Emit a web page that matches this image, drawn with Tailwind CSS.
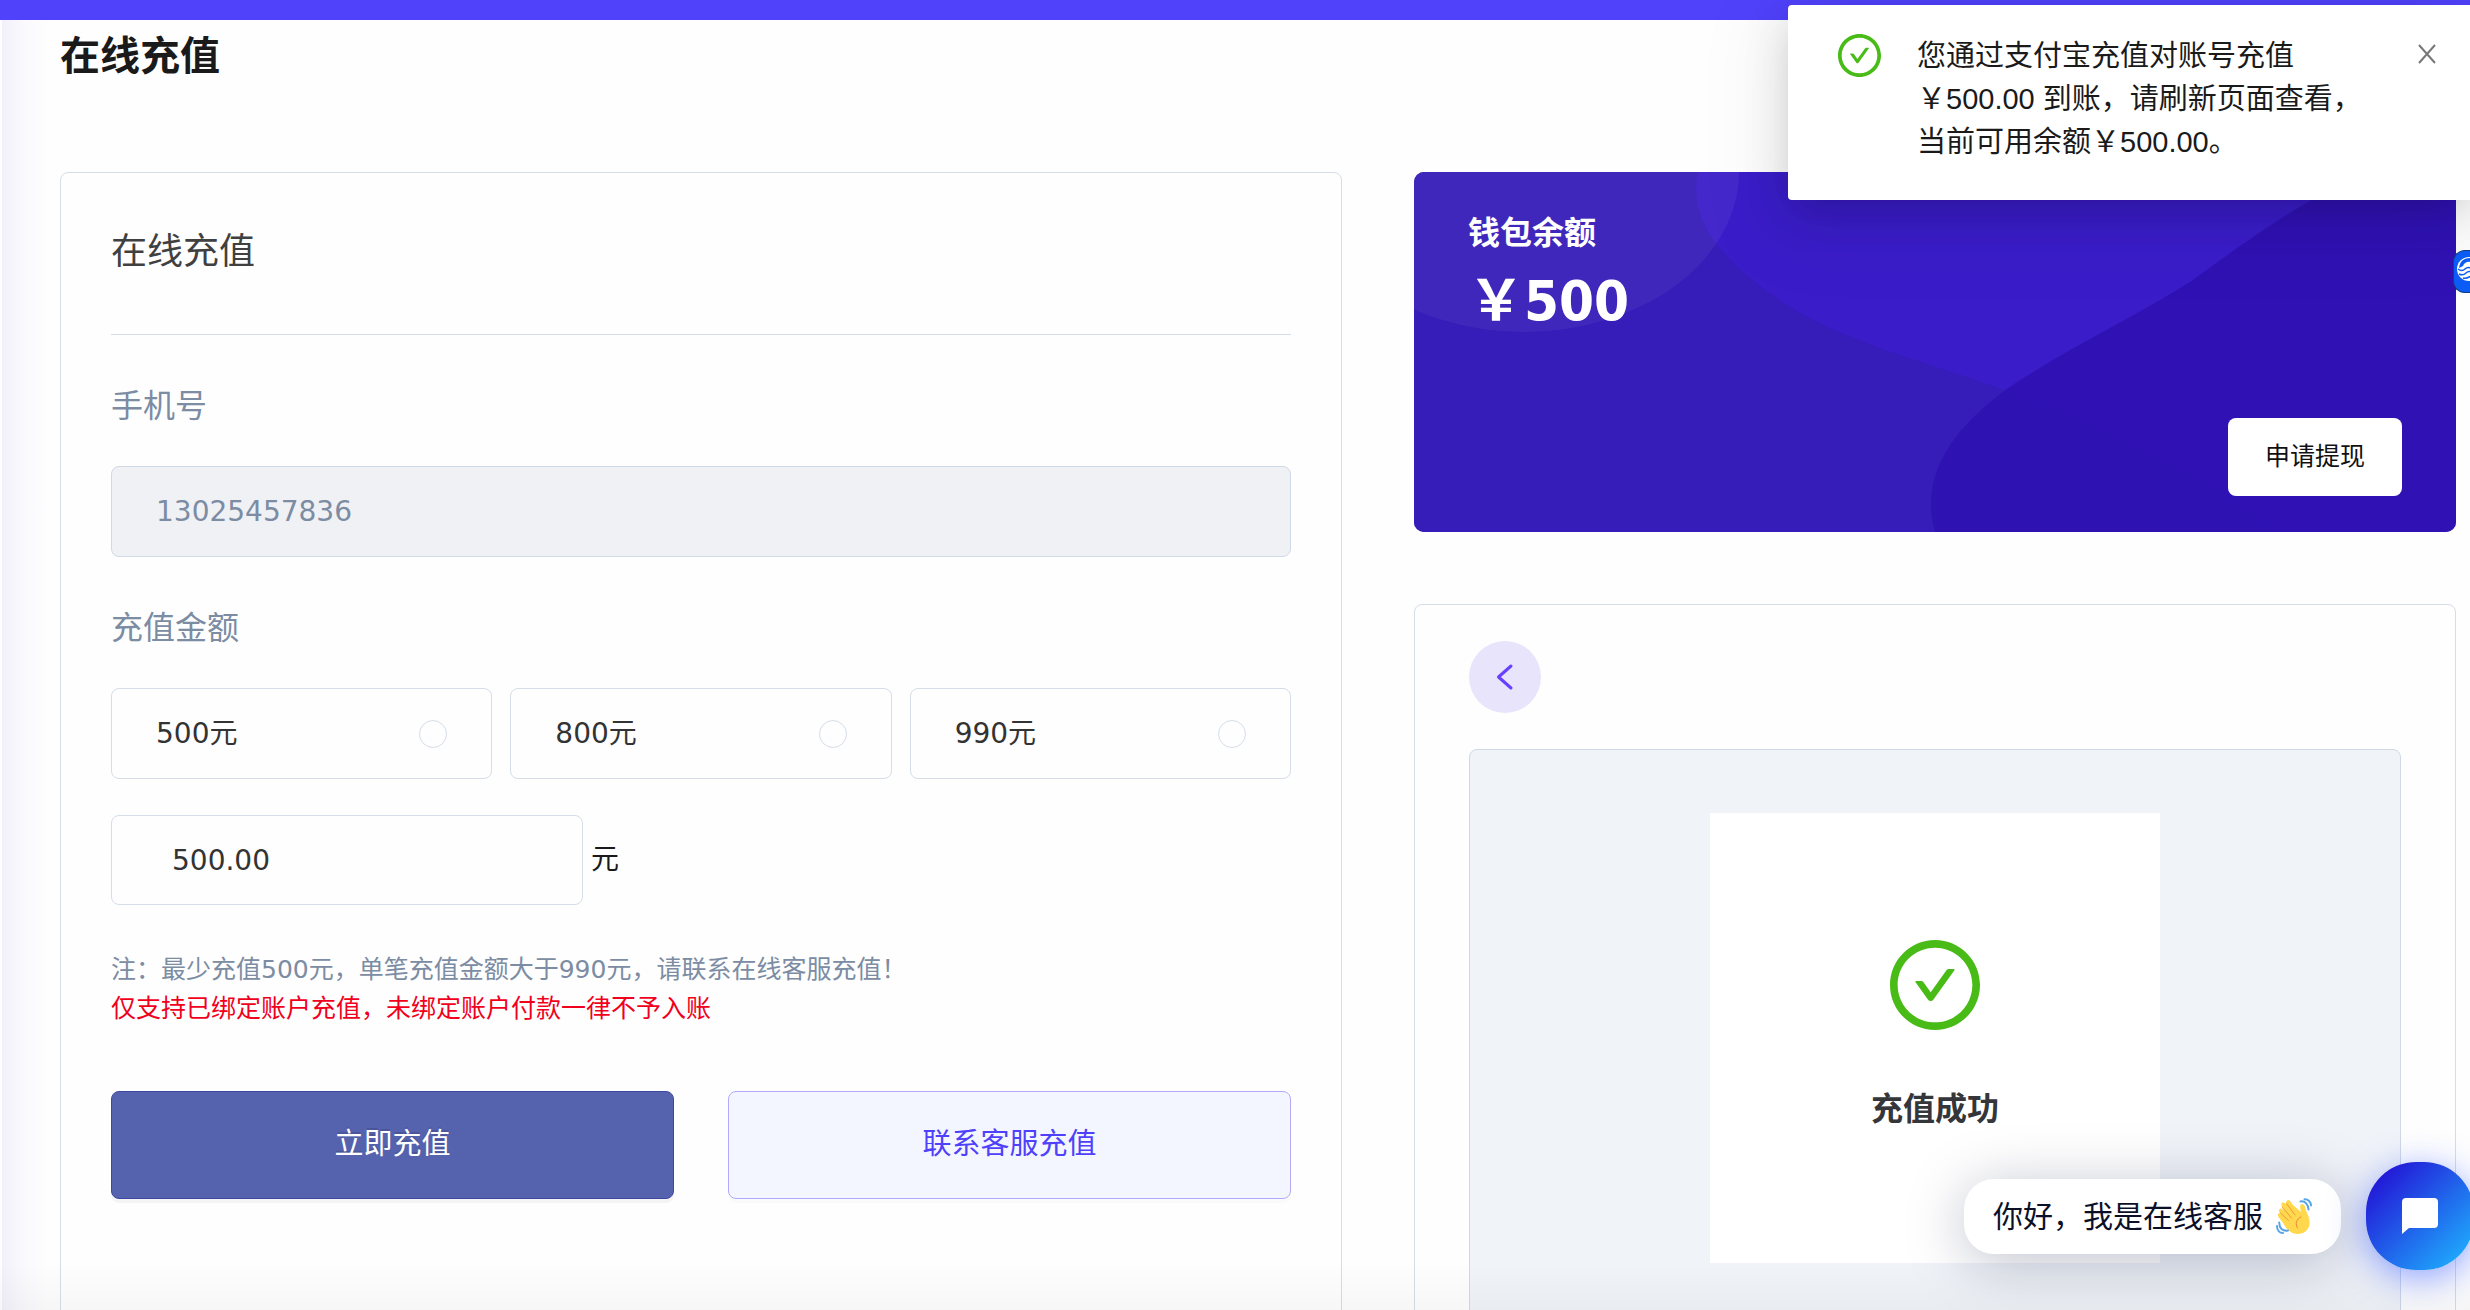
<!DOCTYPE html>
<html lang="zh-CN">
<head>
    <meta charset="UTF-8"/>
    <title>在线充值</title>
    <script src="https://cdn.jsdelivr.net/npm/@tailwindcss/browser@4"></script>
</head>
<body class="relative h-screen overflow-hidden bg-[#fefefe] font-['DejaVu_Sans','Noto_Sans_CJK_SC',sans-serif] text-[#1a1a1a]">
    <!-- Top Bar -->
    <header class="h-5 bg-[#5042fb]"></header>

    <!-- Main Content -->
    <main class="pl-15 pr-3.5">
        <h1 class="pt-1.5 text-[40px] leading-[60px] font-bold">在线充值</h1>

        <div class="mt-[86px] grid grid-cols-[1282fr_1042fr] items-start gap-x-18">
            <!-- Recharge form -->
            <form class="rounded-lg border border-[#d5dde8] px-[50px] pt-[52px] pb-40">
                <h2 class="border-b border-[#d5dde8] pb-[55px] text-[36px] leading-[54px] text-[#404040]">在线充值</h2>

                <label for="phone" class="mt-[47px] block text-[32px] leading-[48px] text-[#7b8ca3]">手机号</label>
                <input id="phone" type="text" value="13025457836" disabled class="mt-9 block h-[91px] w-full rounded-lg border border-[#d0d9e6] bg-[#f0f1f5] px-11 text-[28px] text-[#7b8ca3]"/>

                <label for="amount" class="mt-[47px] block text-[32px] leading-[48px] text-[#7b8ca3]">充值金额</label>
                <div class="mt-9 grid grid-cols-3 gap-[18px] text-[28px] text-[#333]">
                    <label class="flex h-[91px] items-center justify-between rounded-lg border border-[#d5dde8] px-11">
                        500元
                        <input type="radio" name="preset" value="500" class="size-7 appearance-none rounded-full border border-[#d5dde8]"/>
                    </label>
                    <label class="flex h-[91px] items-center justify-between rounded-lg border border-[#d5dde8] px-11">
                        800元
                        <input type="radio" name="preset" value="800" class="size-7 appearance-none rounded-full border border-[#d5dde8]"/>
                    </label>
                    <label class="flex h-[91px] items-center justify-between rounded-lg border border-[#d5dde8] px-11">
                        990元
                        <input type="radio" name="preset" value="990" class="size-7 appearance-none rounded-full border border-[#d5dde8]"/>
                    </label>
                </div>

                <div class="mt-9 flex items-center gap-2 text-[28px]">
                    <input id="amount" type="text" value="500.00" class="h-[90px] w-2/5 rounded-lg border border-[#d5dde8] px-15 text-[#333]"/>
                    <span>元</span>
                </div>

                <p class="mt-[45px] text-[25px] leading-[39px] text-[#7b8ca3]">注：最少充值500元，单笔充值金额大于990元，请联系在线客服充值！</p>
                <p class="text-[25px] leading-[39px] text-[#f0001c]">仅支持已绑定账户充值，未绑定账户付款一律不予入账</p>

                <div class="mt-[63px] grid grid-cols-2 gap-[54px] text-[29px]">
                    <button type="submit" class="h-[108px] rounded-lg border border-[#3d48a3] bg-[#5563af] text-white shadow-[0_4px_0_rgba(0,0,0,0.04)] text-shadow-[0_-2px_0_rgba(0,0,0,0.12)]">立即充值</button>
                    <button type="button" class="h-[108px] rounded-lg border border-[#b3a9fb] bg-[#f3f6ff] text-[#4f40fa] shadow-[0_4px_0_rgba(0,0,0,0.015)]">联系客服充值</button>
                </div>
            </form>

            <div class="flex flex-col gap-18">
                <!-- Wallet -->
                <section class="relative flex min-h-[360px] flex-col overflow-hidden rounded-[10px] bg-[#3a1dc9] px-[54px] pt-[37px] pb-9 text-white">
                    <svg class="absolute inset-0 size-full" viewBox="0 0 1042 360" preserveAspectRatio="none" aria-hidden="true">
                        <path d="M0 0H284C279 26 285 48 301 70C322 97 352 121 392 144C452 176 525 194 593 219C700 258 800 308 860 360H0Z" fill="#361cb9"/>
                        <path d="M1042 0H960C935 8 915 18 896 29C855 52 815 82 776 110C715 148 650 178 593 217C538 257 505 305 521 360H1042Z" fill="#2f11b1" fill-opacity=".88"/>
                        <ellipse cx="110" cy="0" rx="215" ry="160" fill="#fff" fill-opacity=".05"/>
                    </svg>
                    <h2 class="relative text-[32px] leading-[48px] font-bold">钱包余额</h2>
                    <p class="relative mt-1 font-['DejaVu_Sans_Condensed','Noto_Sans_CJK_SC',sans-serif] text-[56px] leading-[80px] font-bold">￥500</p>
                    <button type="button" class="relative mt-auto h-[78px] self-end rounded-lg bg-white px-[37px] text-[25px] text-[#111]">申请提现</button>
                </section>

                <!-- Payment result -->
                <section class="rounded-lg border border-[#d5dde8] px-[54px] pt-9 pb-15">
                    <button type="button" aria-label="返回" class="flex size-18 items-center justify-center rounded-full bg-[#e7e4fb]">
                        <svg class="size-8" viewBox="0 0 32 32" fill="none" stroke="#6840ff" stroke-width="3" stroke-linecap="round" stroke-linejoin="round"><path d="M22 5L9.500 16L22 27"/></svg>
                    </button>
                    <div class="mt-9 rounded-lg border border-[#d0d9e6] bg-[#f0f3f8] py-[63px]">
                        <div class="mx-auto flex size-[450px] flex-col items-center bg-white pt-[127px]">
                            <svg class="size-[90px]" viewBox="64 64 896 896" fill="#49bb17"><path d="M699 353h-46.900c-10.200 0-19.900 4.900-25.900 13.300L469 584.300l-71.200-98.800c-6-8.300-15.600-13.300-25.900-13.300H325c-6.500 0-10.300 7.400-6.500 12.700l124.600 172.800a31.800 31.800 0 0 0 51.700 0l210.600-292c3.900-5.300.1-12.700-6.400-12.700z"/><path d="M512 64C264.600 64 64 264.600 64 512s200.600 448 448 448 448-200.600 448-448S759.400 64 512 64zm0 820c-205.400 0-372-166.600-372-372s166.600-372 372-372 372 166.600 372 372-166.600 372-372 372z"/></svg>
                            <p class="mt-[55px] text-[32px] leading-[48px] font-bold text-[#35363a]">充值成功</p>
                        </div>
                    </div>
                </section>
            </div>
        </div>
    </main>

    <!-- Edge shadows -->
    <div class="pointer-events-none absolute top-5 bottom-0 left-0.5 w-12 bg-linear-to-r from-[#5042d0]/7 via-[#5042d0]/2 to-transparent"></div>
    <div class="pointer-events-none absolute inset-x-0 bottom-0 h-12 bg-linear-to-b from-transparent to-black/3"></div>

    <!-- Notification -->
    <div role="alert" class="absolute top-[5px] right-0 flex w-[682px] items-start rounded-l-sm bg-white pt-[29px] pr-[33px] pb-9 pl-[50px] shadow-[0_12px_32px_-16px_rgba(0,0,0,0.12),0_12px_48px_rgba(0,0,0,0.12),0_18px_80px_24px_rgba(0,0,0,0.05)]">
        <svg class="size-[43px] shrink-0" viewBox="64 64 896 896" fill="#49bb17"><path d="M699 353h-46.900c-10.200 0-19.900 4.900-25.900 13.300L469 584.300l-71.200-98.800c-6-8.300-15.600-13.300-25.900-13.300H325c-6.500 0-10.300 7.400-6.500 12.700l124.600 172.800a31.800 31.800 0 0 0 51.700 0l210.600-292c3.900-5.300.1-12.700-6.400-12.700z"/><path d="M512 64C264.600 64 64 264.600 64 512s200.600 448 448 448 448-200.600 448-448S759.400 64 512 64zm0 820c-205.400 0-372-166.600-372-372s166.600-372 372-372 372 166.600 372 372-166.600 372-372 372z"/></svg>
        <p class="ml-9 flex-1 pt-px font-['Liberation_Sans','Noto_Sans_CJK_SC',sans-serif] text-[29px] leading-[43px]">您通过支付宝充值对账号充值<br/>￥500.00 到账，请刷新页面查看，<br/>当前可用余额￥500.00。</p>
        <button type="button" aria-label="关闭" class="mt-2.5">
            <svg class="size-5" viewBox="0 0 20 20" fill="none" stroke="#777" stroke-width="2"><path d="M2 1L18 19M18 1L2 19"/></svg>
        </button>
    </div>

    <!-- Side tab -->
    <button type="button" aria-label="侧边栏" class="absolute top-[250px] right-0 h-[43px] w-[17px] overflow-hidden rounded-l-xl border border-r-0 border-[#123c80] bg-[#0a5cf5]">
        <svg class="h-[43px] w-[34px]" viewBox="0 0 34 43" fill="none">
            <circle cx="15" cy="18" r="12" fill="#fff"/>
            <path d="M5 17C6 9 11 7 17 7V11C13 10 10 12 9 15Z" fill="#0a5cf5"/>
            <path d="M4 18Q8 21 11 18T19 18M5 23Q9 25 12 22T19 22M9 27Q12 28 17 25" stroke="#0a5cf5" stroke-width="1.500"/>
        </svg>
    </button>

    <!-- Customer service -->
    <div class="absolute right-[-4px] bottom-10 flex items-center gap-[25px]">
        <div class="flex h-[75px] items-center gap-[13px] rounded-[30px] bg-white px-[29px] text-[30px] text-[#0b1028] shadow-[0_8px_60px_rgba(5,15,60,0.26)]">
            你好，我是在线客服
            <svg class="size-9" viewBox="0 0 36 36" fill="none" stroke-linecap="round">
                <path d="M3.500 14C1.800 12.500 4 9.500 6 11L8 12.500C5 8 4.500 4.500 7 4.500C8 4.200 9 5 10 6.500C9.500 2.500 12 1 14 3L17 7L25 14C24 10 23.500 6.500 26 6C28 5.700 29 8 29.500 11C30.500 15 34 19 33.500 26C33 32 28 36 21.500 36C14 36 10 30 7 25L2.500 19C1 16.500 2.500 14.500 4 15.500Z" fill="#ffd84d"/>
                <path d="M4.500 15L12.500 22.500M6.500 9.500L15.500 20M10.500 5.500L19 17" stroke="#ed9a42"/>
                <path d="M25 19C20 21 19 26 21.500 30" stroke="#ed8a3a"/>
                <path d="M28.500 1.200C32 1 35 4 35 7.500M24.500 3.500C29 2.500 32.500 7 32.500 11.500M1 28C1 32 3.500 35 7 35M3.200 24.500C3.200 30 6.500 33.500 12 32.500" stroke="#55a5ea" stroke-width="2"/>
            </svg>
        </div>
        <button type="button" aria-label="在线客服" class="flex size-[108px] items-center justify-center rounded-[50px] bg-linear-to-br/srgb from-[#2313d6] from-10% to-[#1eb4ff] to-95% shadow-[0_8px_36px_rgba(30,70,255,0.5)]">
            <svg class="size-9" viewBox="0 0 36 36" fill="#fff"><path d="M4 0H32Q36 0 36 4V26Q36 30 32 30H7L0 36V4Q0 0 4 0Z"/></svg>
        </button>
    </div>
</body>
</html>
